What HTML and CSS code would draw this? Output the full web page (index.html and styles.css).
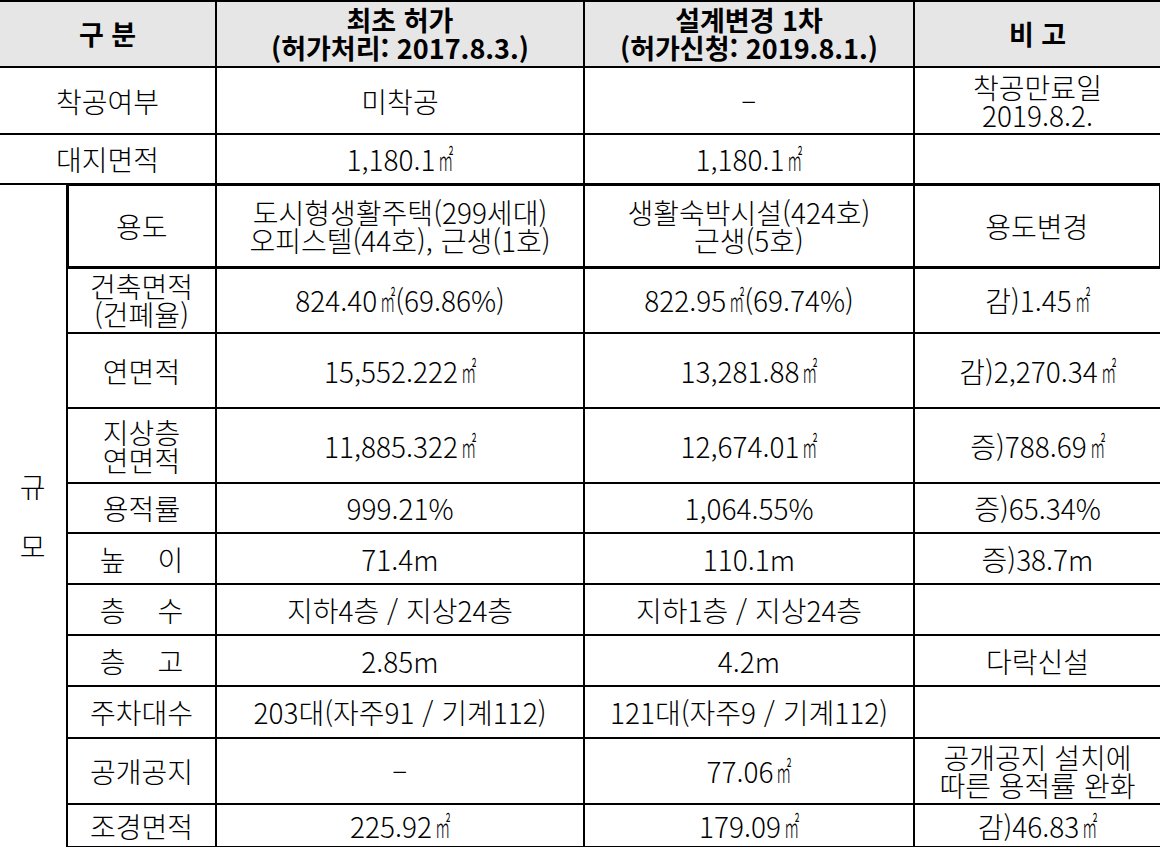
FILE: index.html
```html
<!DOCTYPE html>
<html lang="ko">
<head>
<meta charset="utf-8">
<title>허가 비교표</title>
<link rel="stylesheet" href="styles.css">
</head>
<body>
<table class="spec">
  <colgroup>
    <col class="c-group">
    <col class="c-label">
    <col class="c-first">
    <col class="c-second">
    <col class="c-note">
  </colgroup>
  <thead>
    <tr class="r-head">
      <th class="lead" colspan="2">구 분</th>
      <th>최초 허가<br>(허가처리: 2017.8.3.)</th>
      <th>설계변경 1차<br>(허가신청: 2019.8.1.)</th>
      <th class="tail">비 고</th>
    </tr>
  </thead>
  <tbody>
    <tr class="r-start">
      <td class="lead" colspan="2">착공여부</td>
      <td>미착공</td>
      <td><span class="dash">-</span></td>
      <td class="tail">착공만료일<br>2019.8.2.</td>
    </tr>
    <tr class="r-site">
      <td class="lead" colspan="2">대지면적</td>
      <td>1,180.1<span class="sq">㎡</span></td>
      <td>1,180.1<span class="sq">㎡</span></td>
      <td class="tail"></td>
    </tr>
    <tr class="r-use">
      <td class="lead group" rowspan="11">규<br><br>모</td>
      <td class="box-l">용도</td>
      <td>도시형생활주택(299세대)<br>오피스텔(44호), 근생(1호)</td>
      <td>생활숙박시설(424호)<br>근생(5호)</td>
      <td class="tail box-r">용도변경</td>
    </tr>
    <tr class="r-bldg">
      <td>건축면적<br>(건폐율)</td>
      <td>824.40<span class="sq">㎡</span>(69.86%)</td>
      <td>822.95<span class="sq">㎡</span>(69.74%)</td>
      <td class="tail">감)1.45<span class="sq">㎡</span></td>
    </tr>
    <tr class="r-gfa">
      <td>연면적</td>
      <td>15,552.222<span class="sq">㎡</span></td>
      <td>13,281.88<span class="sq">㎡</span></td>
      <td class="tail">감)2,270.34<span class="sq">㎡</span></td>
    </tr>
    <tr class="r-above">
      <td>지상층<br>연면적</td>
      <td>11,885.322<span class="sq">㎡</span></td>
      <td>12,674.01<span class="sq">㎡</span></td>
      <td class="tail">증)788.69<span class="sq">㎡</span></td>
    </tr>
    <tr class="r-far">
      <td>용적률</td>
      <td>999.21%</td>
      <td>1,064.55%</td>
      <td class="tail">증)65.34%</td>
    </tr>
    <tr class="r-height">
      <td class="spread">높 이</td>
      <td>71.4m</td>
      <td>110.1m</td>
      <td class="tail">증)38.7m</td>
    </tr>
    <tr class="r-floors">
      <td class="spread">층 수</td>
      <td>지하4층 / 지상24층</td>
      <td>지하1층 / 지상24층</td>
      <td class="tail"></td>
    </tr>
    <tr class="r-fh">
      <td class="spread">층 고</td>
      <td>2.85m</td>
      <td>4.2m</td>
      <td class="tail">다락신설</td>
    </tr>
    <tr class="r-park">
      <td>주차대수</td>
      <td>203대(자주91 / 기계112)</td>
      <td>121대(자주9 / 기계112)</td>
      <td class="tail"></td>
    </tr>
    <tr class="r-open">
      <td>공개공지</td>
      <td><span class="dash">-</span></td>
      <td>77.06<span class="sq">㎡</span></td>
      <td class="tail">공개공지 설치에<br>따른 용적률 완화</td>
    </tr>
    <tr class="r-land">
      <td>조경면적</td>
      <td>225.92<span class="sq">㎡</span></td>
      <td>179.09<span class="sq">㎡</span></td>
      <td class="tail">감)46.83<span class="sq">㎡</span></td>
    </tr>
  </tbody>
</table>
</body>
</html>
```

FILE: styles.css
```css
html, body {
  margin: 0;
  padding: 0;
  background: #ffffff;
}

body {
  font-family: "Noto Sans CJK KR", "Noto Sans", sans-serif;
  color: #000000;
  font-size: 28px;
  font-weight: 300;
  line-height: 28px;
}

.spec {
  width: 1160px;
  border-collapse: collapse;
  table-layout: fixed;
  border: none;
}

.c-group { width: 67px; }
.c-label { width: 149px; }
.c-first { width: 368px; }
.c-second { width: 330px; }
.c-note { width: 246px; }

.spec th,
.spec td {
  border: 2px solid #000000;
  padding: 0;
  text-align: center;
  vertical-align: middle;
  white-space: nowrap;
}

.spec th {
  background: #e6e6e6;
  font-weight: 700;
  font-size: 27px;
  line-height: 28px;
}

.spec .lead { border-left: none; }
.spec .tail { border-right: none; }

.r-head { height: 66px; }
.r-start { height: 67px; }
.r-site { height: 50px; }
.r-use { height: 83px; }
.r-bldg { height: 66px; }
.r-gfa { height: 75px; }
.r-above { height: 75px; }
.r-far { height: 50px; }
.r-height { height: 51px; }
.r-floors { height: 51px; }
.r-fh { height: 51px; }
.r-park { height: 52px; }
.r-open { height: 66px; }
.r-land { height: 43px; }

.r-use td {
  border-top: 3px solid #000000;
  border-bottom: 3px solid #000000;
}

.r-use td.group {
  border-top: 2px solid #000000;
  border-bottom: none;
  border-left: none;
}

.spec .box-l { border-left: 3px solid #000000; }
.spec .box-r { border-right: 3px solid #000000; }

.group {
  line-height: 30px;
}

.spread {
  word-spacing: 24px;
}

.dash {
  display: inline-block;
  transform: scaleX(1.8);
}

.sq {
  display: inline-block;
  width: 15px;
  margin-left: 3px;
  transform: scaleX(0.55);
  transform-origin: left center;
}
```
